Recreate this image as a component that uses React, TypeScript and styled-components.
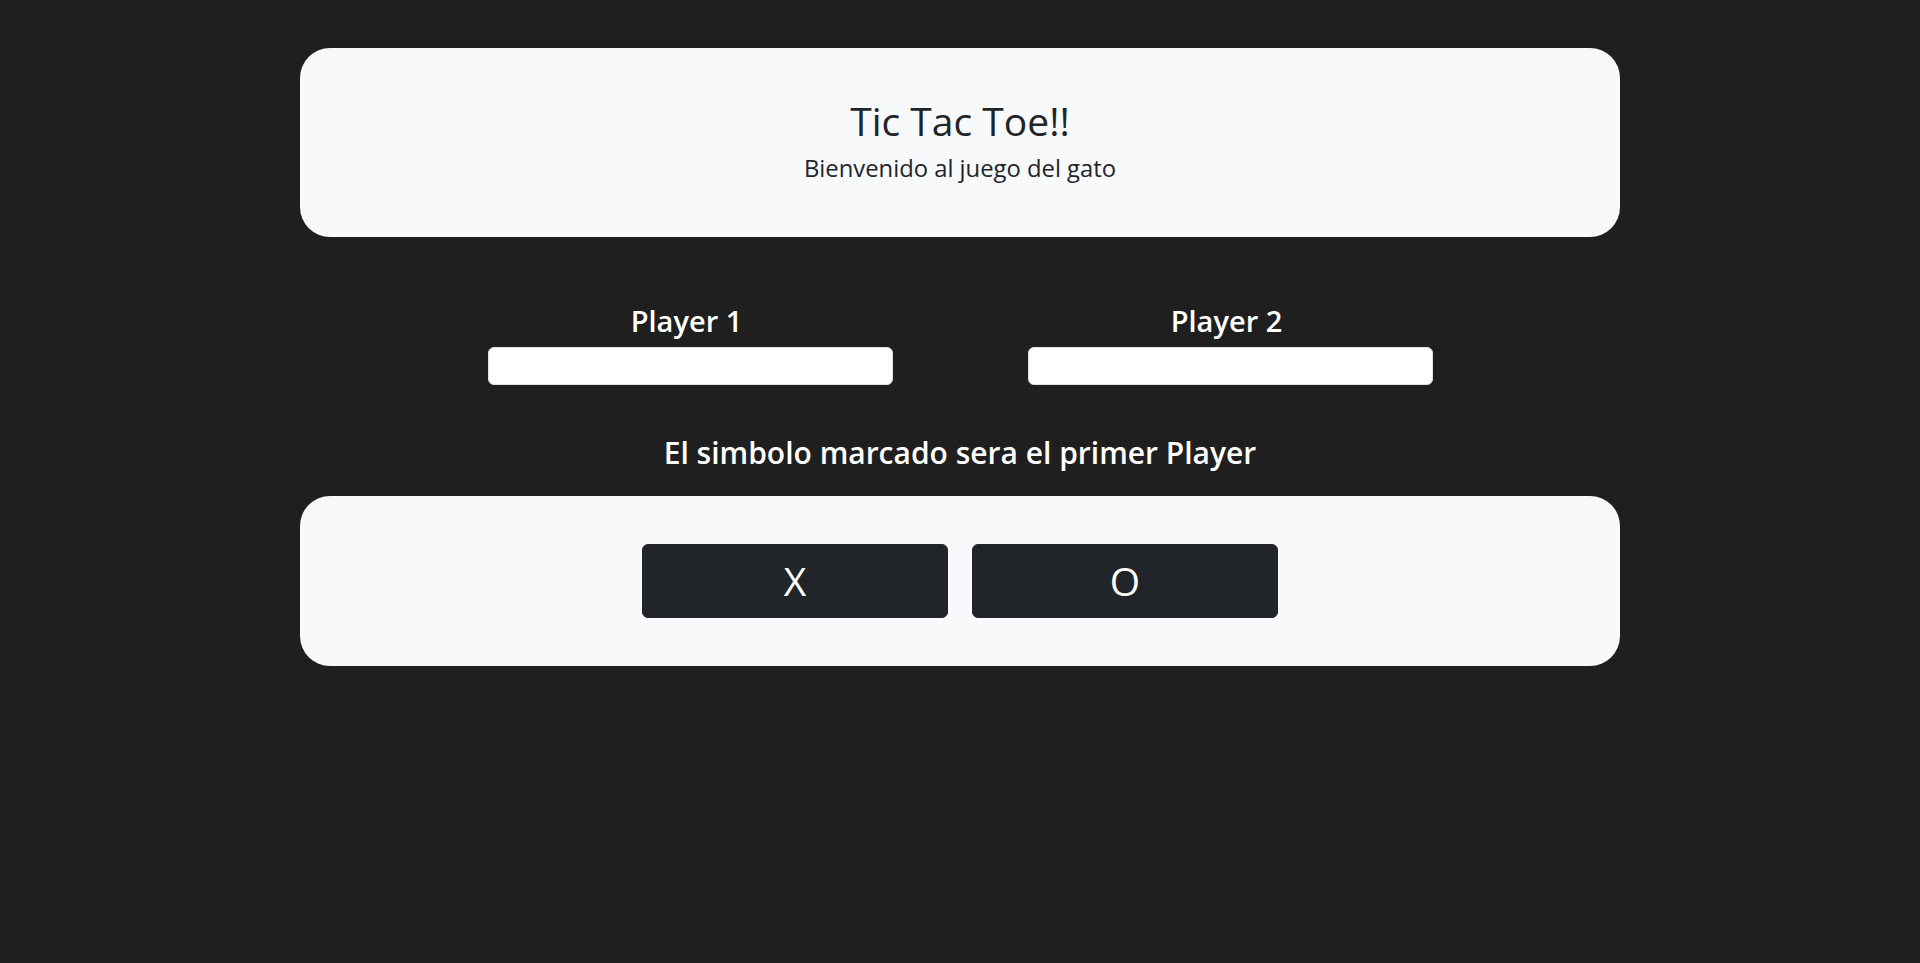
import React from "react";
import styled, { createGlobalStyle } from "styled-components";

const GlobalStyle = createGlobalStyle`
  html, body {
    margin: 0;
    padding: 0;
    background: #1f1f1f;
    font-family: "Open Sans", "Noto Sans", "Liberation Sans", sans-serif;
    color: #212529;
  }
  * { box-sizing: border-box; }
`;

const Page = styled.main`
  width: 1320px;
  margin: 0 auto;
  padding-top: 48px;
  display: flex;
  flex-direction: column;
  align-items: stretch;
`;

const Card = styled.section<{ $pad: string }>`
  background: #f8f9fa;
  border-radius: 30px;
  padding: ${(p) => p.$pad};
  display: flex;
  flex-direction: column;
  align-items: center;
`;

const Title = styled.h1`
  margin: 0 0 8px;
  font-size: 39px;
  line-height: 48px;
  font-weight: 500;
  color: #212529;
`;

const Subtitle = styled.p`
  margin: 0;
  font-size: 23.8px;
  line-height: 30px;
  font-weight: 400;
  color: #212529;
`;

const PlayersRow = styled.div`
  display: flex;
  justify-content: center;
  gap: 135px;
  margin-top: 66px;
`;

const PlayerGroup = styled.div`
  width: 405px;
  display: flex;
  flex-direction: column;
  align-items: center;
  gap: 8px;
`;

const PlayerLabel = styled.label`
  margin-right: 7px;
  font-size: 29px;
  line-height: 36px;
  font-weight: 600;
  color: #ffffff;
`;

const NameInput = styled.input`
  width: 100%;
  height: 38px;
  border: 1px solid #dee2e6;
  border-radius: 6px;
  background: #ffffff;
  padding: 6px 12px;
  font-size: 16px;
  font-family: inherit;
  outline: none;
`;

const Hint = styled.h3`
  margin: 50px 0 25px;
  text-align: center;
  font-size: 30px;
  line-height: 36px;
  font-weight: 600;
  color: #ffffff;
`;

const ButtonRow = styled.div`
  display: flex;
  justify-content: center;
  gap: 24px;
`;

const SymbolButton = styled.button`
  width: 306px;
  height: 74px;
  background: #212529;
  color: #ffffff;
  border: 1px solid #212529;
  border-radius: 6px;
  font-family: inherit;
  font-size: 39px;
  line-height: 60px;
  font-weight: 400;
  padding: 6px 12px;
  cursor: pointer;
`;

export default function App() {
  return (
    <>
      <GlobalStyle />
      <Page>
        <Card $pad="49px 0 54px">
          <Title>Tic Tac Toe!!</Title>
          <Subtitle>Bienvenido al juego del gato</Subtitle>
        </Card>
        <PlayersRow>
          <PlayerGroup>
            <PlayerLabel htmlFor="p1">Player 1</PlayerLabel>
            <NameInput id="p1" type="text" />
          </PlayerGroup>
          <PlayerGroup>
            <PlayerLabel htmlFor="p2">Player 2</PlayerLabel>
            <NameInput id="p2" type="text" />
          </PlayerGroup>
        </PlayersRow>
        <Hint>El simbolo marcado sera el primer Player</Hint>
        <Card $pad="48px 0">
          <ButtonRow>
            <SymbolButton>X</SymbolButton>
            <SymbolButton>O</SymbolButton>
          </ButtonRow>
        </Card>
      </Page>
    </>
  );
}
